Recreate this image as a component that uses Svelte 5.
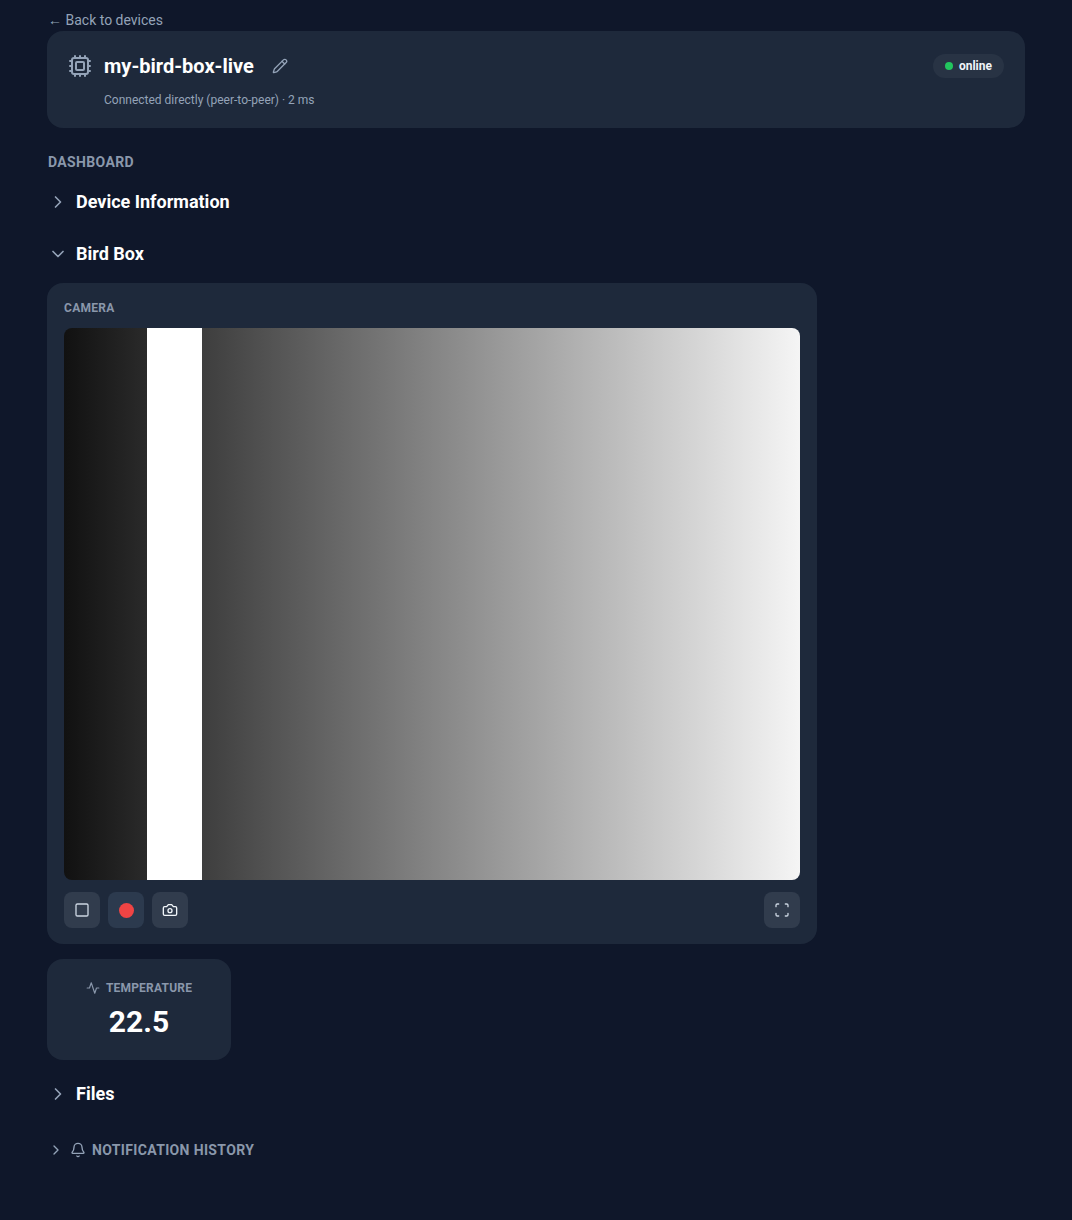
<script lang="ts">
  let deviceName = 'my-bird-box-live';
  let latency = 2;
  let temperature = 22.5;
</script>

<div class="page">
  <a class="back" href="#back">← Back to devices</a>

  <header class="device-card">
    <div class="device-top">
      <div class="device-title">
        <svg class="chip" viewBox="0 0 24 24" fill="none" stroke="currentColor" stroke-width="2" stroke-linecap="round" stroke-linejoin="round">
          <rect x="4" y="4" width="16" height="16" rx="2" />
          <rect x="8" y="8" width="8" height="8" rx="1" />
          <path d="M12 20v2M12 2v2M17 20v2M17 2v2M2 12h2M2 17h2M2 7h2M20 12h2M20 17h2M20 7h2M7 20v2M7 2v2" />
        </svg>
        <h1>{deviceName}</h1>
        <svg class="pencil" viewBox="0 0 24 24" fill="none" stroke="currentColor" stroke-width="2" stroke-linecap="round" stroke-linejoin="round">
          <path d="M21.174 6.812a1 1 0 0 0-3.986-3.987L3.842 16.174a2 2 0 0 0-.5.83l-1.321 4.352a.5.5 0 0 0 .623.622l4.353-1.32a2 2 0 0 0 .83-.497z" />
          <path d="m15 5 4 4" />
        </svg>
      </div>
      <span class="badge"><span class="dot"></span>online</span>
    </div>
    <p class="connection">Connected directly (peer-to-peer) · {latency} ms</p>
  </header>

  <h2 class="section-label">DASHBOARD</h2>

  <button class="group-head">
    <svg class="caret" viewBox="0 0 24 24" fill="none" stroke="currentColor" stroke-width="2" stroke-linecap="round" stroke-linejoin="round"><path d="m9 18 6-6-6-6" /></svg>
    <span>Device Information</span>
  </button>

  <button class="group-head">
    <svg class="caret" viewBox="0 0 24 24" fill="none" stroke="currentColor" stroke-width="2" stroke-linecap="round" stroke-linejoin="round"><path d="m6 9 6 6 6-6" /></svg>
    <span>Bird Box</span>
  </button>

  <section class="camera-card">
    <div class="camera-label">CAMERA</div>
    <div class="video"></div>
    <div class="controls">
      <div class="controls-left">
        <button class="ctrl" aria-label="Stop">
          <svg viewBox="0 0 24 24" fill="none" stroke="#cbd5e1" stroke-width="2" stroke-linecap="round" stroke-linejoin="round"><rect x="3" y="3" width="18" height="18" rx="2" /></svg>
        </button>
        <button class="ctrl record" aria-label="Record"><span class="rec"></span></button>
        <button class="ctrl" aria-label="Snapshot">
          <svg viewBox="0 0 24 24" fill="none" stroke="#f1f5f9" stroke-width="2" stroke-linecap="round" stroke-linejoin="round">
            <path d="M14.500 4h-5L7 7H4a2 2 0 0 0-2 2v9a2 2 0 0 0 2 2h16a2 2 0 0 0 2-2V9a2 2 0 0 0-2-2h-3z" />
            <circle cx="12" cy="13" r="3" />
          </svg>
        </button>
      </div>
      <button class="ctrl" aria-label="Fullscreen">
        <svg viewBox="0 0 24 24" fill="none" stroke="#cbd5e1" stroke-width="2" stroke-linecap="round" stroke-linejoin="round">
          <path d="M3 7V5a2 2 0 0 1 2-2h2M17 3h2a2 2 0 0 1 2 2v2M21 17v2a2 2 0 0 1-2 2h-2M7 21H5a2 2 0 0 1-2-2v-2" />
        </svg>
      </button>
    </div>
  </section>

  <section class="metric">
    <div class="metric-label">
      <svg viewBox="0 0 24 24" fill="none" stroke="currentColor" stroke-width="2" stroke-linecap="round" stroke-linejoin="round"><path d="M22 12h-4l-3 9L9 3l-3 9H2" /></svg>
      <span>TEMPERATURE</span>
    </div>
    <div class="metric-value">{temperature}</div>
  </section>

  <button class="group-head files">
    <svg class="caret" viewBox="0 0 24 24" fill="none" stroke="currentColor" stroke-width="2" stroke-linecap="round" stroke-linejoin="round"><path d="m9 18 6-6-6-6" /></svg>
    <span>Files</span>
  </button>

  <button class="notif-head">
    <svg class="notif-caret" viewBox="0 0 24 24" fill="none" stroke="currentColor" stroke-width="2" stroke-linecap="round" stroke-linejoin="round"><path d="m9 18 6-6-6-6" /></svg>
    <svg class="bell" viewBox="0 0 24 24" fill="none" stroke="currentColor" stroke-width="2" stroke-linecap="round" stroke-linejoin="round">
      <path d="M10.300 21a1.900 1.900 0 0 0 3.400 0" />
      <path d="M3.300 15.300A1 1 0 0 0 4 17h16a1 1 0 0 0 .7-1.700C19.400 14 18 12.500 18 8A6 6 0 0 0 6 8c0 4.500-1.400 6-2.700 7.300" />
    </svg>
    <span>NOTIFICATION HISTORY</span>
  </button>
</div>

<style>
  :global(html) {
    background: #0f172a;
  }

  :global(body) {
    margin: 0;
    background: #0f172a;
    font-family: Roboto, "Liberation Sans", sans-serif;
  }

  :global(*) {
    box-sizing: border-box;
  }

  .page {
    min-height: 1220px;
    padding: 12px 47px 0;
    color: #fff;
  }

  .back {
    display: block;
    height: 19px;
    padding-left: 1px;
    font-size: 14px;
    line-height: 16px;
    color: #94a3b8;
    text-decoration: none;
  }

  .device-card {
    height: 97px;
    padding: 23px 21px 0;
    background: #1e293b;
    border-radius: 16px;
  }

  .device-top {
    display: flex;
    justify-content: space-between;
    align-items: center;
    height: 24px;
  }

  .device-title {
    display: flex;
    align-items: center;
  }

  .chip {
    width: 24px;
    height: 24px;
    color: #94a3b8;
    margin-right: 12px;
  }

  h1 {
    margin: 0;
    font-size: 20px;
    line-height: 24px;
    font-weight: 700;
  }

  .pencil {
    width: 16px;
    height: 16px;
    margin-left: 18px;
    color: #94a3b8;
  }

  .badge {
    display: flex;
    align-items: center;
    gap: 6px;
    height: 24px;
    padding: 0 12px;
    background: #283344;
    border-radius: 12px;
    font-size: 12px;
    font-weight: 700;
    color: #f1f5f9;
  }

  .dot {
    width: 8px;
    height: 8px;
    border-radius: 50%;
    background: #22c55e;
  }

  .connection {
    margin: 14px 0 0 36px;
    font-size: 12px;
    line-height: 16px;
    color: #94a3b8;
  }

  .section-label {
    margin: 26px 0 0;
    padding-left: 1px;
    font-size: 14px;
    line-height: 16px;
    font-weight: 700;
    letter-spacing: 0.025em;
    color: #8a97ab;
  }

  .group-head {
    display: flex;
    align-items: center;
    gap: 8px;
    width: 100%;
    height: 24px;
    margin-top: 28px;
    padding: 0 0 0 1px;
    background: none;
    border: none;
    color: #fff;
    font: 700 18px/24px Roboto, "Liberation Sans", sans-serif;
    text-align: left;
  }

  .section-label + .group-head {
    margin-top: 20px;
  }

  .caret {
    width: 20px;
    height: 20px;
    color: #94a3b8;
  }

  .camera-card {
    width: 770px;
    height: 661px;
    margin-top: 17px;
    padding: 17px 17px 16px;
    background: #1e293b;
    border-radius: 16px;
  }

  .camera-label {
    height: 16px;
    font-size: 12px;
    line-height: 16px;
    font-weight: 700;
    letter-spacing: 0.025em;
    color: #8a97ab;
  }

  .video {
    height: 552px;
    margin-top: 12px;
    border-radius: 8px;
    background: linear-gradient(90deg,
      #111 0,
      #2a2a2a 82.5px,
      #fff 83px,
      #fff 138px,
      #3e3e3e 138.5px,
      #f5f5f5 100%);
  }

  .controls {
    display: flex;
    justify-content: space-between;
    margin-top: 12px;
  }

  .controls-left {
    display: flex;
    gap: 8px;
  }

  .ctrl {
    display: flex;
    align-items: center;
    justify-content: center;
    width: 36px;
    height: 36px;
    padding: 0;
    border: none;
    border-radius: 8px;
    background: #313c4d;
  }

  .ctrl.record {
    background: #2c3a4e;
  }

  .ctrl svg {
    width: 16px;
    height: 16px;
  }

  .rec {
    width: 15px;
    height: 15px;
    border-radius: 50%;
    background: #ef4444;
  }

  .metric {
    display: flex;
    flex-direction: column;
    align-items: center;
    width: 184px;
    height: 101px;
    margin-top: 15px;
    padding-top: 21px;
    background: #1e293b;
    border-radius: 16px;
  }

  .metric-label {
    display: flex;
    align-items: center;
    gap: 6px;
    height: 16px;
    font-size: 12px;
    font-weight: 700;
    letter-spacing: 0.2px;
    color: #8a97ab;
  }

  .metric-label svg {
    width: 14px;
    height: 14px;
  }

  .metric-value {
    margin-top: 8px;
    font-size: 30px;
    line-height: 36px;
    font-weight: 700;
  }

  .group-head.files {
    margin-top: 22px;
  }

  .notif-head {
    display: flex;
    align-items: center;
    width: 100%;
    height: 24px;
    margin-top: 32px;
    padding: 0 0 0 1px;
    background: none;
    border: none;
    color: #8a97ab;
    font: 700 14px/24px Roboto, "Liberation Sans", sans-serif;
    letter-spacing: 0.025em;
    text-align: left;
  }

  .notif-caret {
    width: 16px;
    height: 16px;
    color: #94a3b8;
  }

  .bell {
    width: 16px;
    height: 16px;
    margin: 0 6px;
    color: #94a3b8;
  }
</style>
